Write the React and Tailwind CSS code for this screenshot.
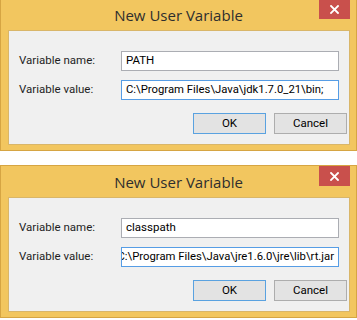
import React from "react";

function CloseBtn() {
  return (
    <div className="absolute right-[6px] top-0 w-[31px] h-[20px] bg-[#c9504c] flex items-center justify-center">
      <svg width="9" height="9" viewBox="0 0 9 9">
        <path d="M1 1 L8 8 M8 1 L1 8" stroke="#ffffff" strokeWidth="1.8" strokeLinecap="square" />
      </svg>
    </div>
  );
}

function Dialog({ name, value, scrolled, className }) {
  return (
    <div className={"relative w-[357px] bg-[#f2c65f] border border-[#d6a543] " + className}>
      <CloseBtn />
      <div className="h-[31px] flex items-center justify-center pt-[1px] text-[15px] text-[#2e2e2e] [font-family:'Open_Sans','Noto_Sans',sans-serif]">
        New User Variable
      </div>
      <div className="ml-[7px] mr-[6px] mb-[5px] h-[115px] bg-[#f0f0f0] border border-[#d9b669] pt-[20px] pl-[10px] text-[11.5px] text-[#1e1e1e] [font-family:'Roboto','Noto_Sans',sans-serif]">
        <div className="flex items-center h-[20px]">
          <div className="w-[102px]">Variable name:</div>
          <div className="w-[218px] h-[20px] bg-white border border-[#abadb3] flex items-center pl-[4px] text-black">
            {name}
          </div>
        </div>
        <div className="flex items-center h-[20px] mt-[9px]">
          <div className="w-[102px]">Variable value:</div>
          <div
            className={
              "w-[218px] h-[20px] bg-white border border-[#569de5] flex items-center overflow-hidden text-black whitespace-nowrap text-[11.3px] " +
              (scrolled ? "justify-end pr-[4px]" : "justify-start pl-[4px]")
            }
          >
            <span className="shrink-0">{value}</span>
          </div>
        </div>
        <div className="flex justify-end gap-[8px] mt-[13px] pr-[2px]">
          <div className="w-[73px] h-[21px] border border-[#5aa2e0] bg-[#e3e3e3] flex items-center justify-center text-black">
            OK
          </div>
          <div className="w-[73px] h-[21px] border border-[#adadad] bg-[#e3e3e3] flex items-center justify-center text-black">
            Cancel
          </div>
        </div>
      </div>
    </div>
  );
}

export default function App() {
  return (
    <div className="w-[357px] h-[320px] bg-white overflow-hidden">
      <Dialog name="PATH" value="C:\Program Files\Java\jdk1.7.0_21\bin;" className="-mt-[2px]" />
      <Dialog name="classpath" value="C:\Program Files\Java\jre1.6.0\jre\lib\rt.jar" scrolled className="mt-[14px]" />
    </div>
  );
}
